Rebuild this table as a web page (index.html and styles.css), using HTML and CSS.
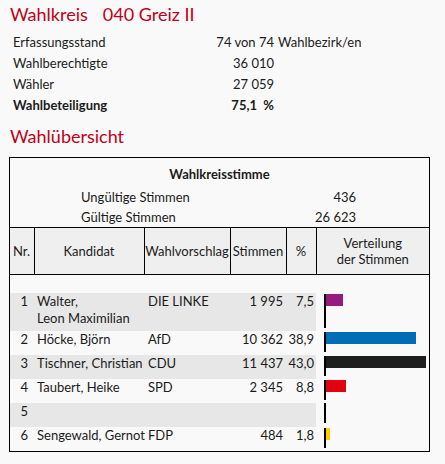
FILE: index.html
```html
<!DOCTYPE html>
<html lang="de">
<head>
<meta charset="utf-8">
<title>Wahlkreis 040 Greiz II</title>
<link rel="stylesheet" href="styles.css">
</head>
<body>
<main class="page">
  <h1 class="heading"><span>Wahlkreis</span><span class="heading-num">040 Greiz II</span></h1>
  <div class="info">
    <div class="info-label">Erfassungsstand</div><div class="info-value">74 von 74</div><div class="info-unit">Wahlbezirk/en</div>
    <div class="info-label">Wahlberechtigte</div><div class="info-value">36&nbsp;010</div><div class="info-unit"></div>
    <div class="info-label">Wähler</div><div class="info-value">27&nbsp;059</div><div class="info-unit"></div>
    <div class="info-label strong">Wahlbeteiligung</div><div class="info-value strong">75,1&nbsp;&nbsp;%</div><div class="info-unit"></div>
  </div>
  <h2 class="heading heading-second">Wahlübersicht</h2>
  <section class="box">
    <div class="box-title">Wahlkreisstimme</div>
    <div class="summary">
      <div>Ungültige Stimmen</div><div class="summary-value">436</div>
      <div>Gültige Stimmen</div><div class="summary-value">26&nbsp;623</div>
    </div>
    <table class="results">
      <colgroup>
        <col class="w-nr"><col class="w-name"><col class="w-party"><col class="w-votes"><col class="w-pct"><col class="w-bar">
      </colgroup>
      <thead>
        <tr>
          <th class="c-nr">Nr.</th>
          <th>Kandidat</th>
          <th>Wahlvorschlag</th>
          <th>Stimmen</th>
          <th>%</th>
          <th>Verteilung<br>der Stimmen</th>
        </tr>
      </thead>
      <tbody>
        <tr class="spacer"><td colspan="6"></td></tr>
        <tr class="row odd tall">
          <td class="nr">1</td><td class="name">Walter,<br>Leon Maximilian</td><td class="party">DIE LINKE</td><td class="num">1&nbsp;995</td><td class="num pct">7,5</td>
          <td class="bar-cell"><div class="bar-axis"><div class="bar" style="width:17px;background:#951b81"></div></div></td>
        </tr>
        <tr class="row">
          <td class="nr">2</td><td class="name">Höcke, Björn</td><td class="party">AfD</td><td class="num">10&nbsp;362</td><td class="num pct">38,9</td>
          <td class="bar-cell"><div class="bar-axis"><div class="bar" style="width:90px;background:#006db6"></div></div></td>
        </tr>
        <tr class="row odd">
          <td class="nr">3</td><td class="name">Tischner, Christian</td><td class="party">CDU</td><td class="num">11&nbsp;437</td><td class="num pct">43,0</td>
          <td class="bar-cell"><div class="bar-axis"><div class="bar" style="width:100px;background:#1e1e1e"></div></div></td>
        </tr>
        <tr class="row">
          <td class="nr">4</td><td class="name">Taubert, Heike</td><td class="party">SPD</td><td class="num">2&nbsp;345</td><td class="num pct">8,8</td>
          <td class="bar-cell"><div class="bar-axis"><div class="bar" style="width:20px;background:#e3000f"></div></div></td>
        </tr>
        <tr class="row odd">
          <td class="nr">5</td><td class="name"></td><td class="party"></td><td class="num"></td><td class="num pct"></td>
          <td class="bar-cell"><div class="bar-axis"></div></td>
        </tr>
        <tr class="row">
          <td class="nr">6</td><td class="name">Sengewald, Gernot</td><td class="party">FDP</td><td class="num">484</td><td class="num pct">1,8</td>
          <td class="bar-cell"><div class="bar-axis"><div class="bar" style="width:4px;background:#ffcc00"></div></div></td>
        </tr>
      </tbody>
    </table>
  </section>
</main>
</body>
</html>
```

FILE: styles.css
```css
* { box-sizing: border-box; }
html, body { margin: 0; padding: 0; }
body {
  background: #f9f9f9;
  color: #1b1b1b;
  font-family: Lato, "Liberation Sans", sans-serif;
  font-size: 13px;
}
.page { padding: 2px 0 0 9px; width: 430px; }
.heading {
  margin: 0;
  padding-left: 1px;
  font-size: 18px;
  font-weight: 400;
  line-height: 24px;
  color: #c00018;
}
.heading-num { margin-left: 15px; }
.heading-second { margin-top: 8px; }
.info {
  display: grid;
  grid-template-columns: 140px 117px auto;
  column-gap: 4px;
  padding-left: 4px;
  margin-top: 6px;
  line-height: 21px;
}
.info-value { text-align: right; }
.strong { font-weight: 700; }
.box {
  margin-top: 9px;
  width: 421px;
  border: 1px solid #000;
}
.box-title {
  text-align: center;
  font-weight: 700;
  line-height: 20px;
  padding-top: 6px;
  margin-bottom: 3px;
}
.summary {
  display: grid;
  grid-template-columns: 200px 75px;
  padding-left: 71px;
  line-height: 20px;
}
.summary-value { text-align: right; }
.results {
  width: 100%;
  table-layout: fixed;
  border-collapse: collapse;
  margin-top: 0;
}
.w-nr { width: 24px; }
.w-name { width: 110px; }
.w-party { width: 86px; }
.w-votes { width: 56px; }
.w-pct { width: 30px; }
.results th {
  background: #efefef;
  font-weight: 400;
  border: 1px solid #000;
  height: 47px;
  line-height: 16px;
  padding: 0;
  text-align: center;
  white-space: nowrap;
}
.results th:first-child { border-left: 0; }
.results th:last-child { border-right: 0; }
.results th.c-nr { text-align: left; padding-left: 3px; }
.spacer td { height: 18px; padding: 0; }
.row td {
  height: 24px;
  padding: 0;
  vertical-align: top;
  line-height: 17px;
  white-space: nowrap;
  overflow: visible;
}
.row.tall td { height: 38px; }
.row.odd td { background: #e7e7e7; }
.row.odd td.bar-cell { background: transparent; }
.row td.nr { text-align: right; padding-right: 6px; }
.row td.name { padding-left: 3px; }
.row td.party { padding-left: 4px; }
.row td.num { text-align: right; padding-right: 3px; }
.row td.pct { padding-right: 2px; }
.row td.bar-cell { padding: 0 0 0 8px; }
.bar-axis {
  border-left: 2px solid #000;
  height: 20px;
}
.row.tall .bar-axis { height: 34px; }
.bar { height: 12px; margin-top: 1px; }
```
